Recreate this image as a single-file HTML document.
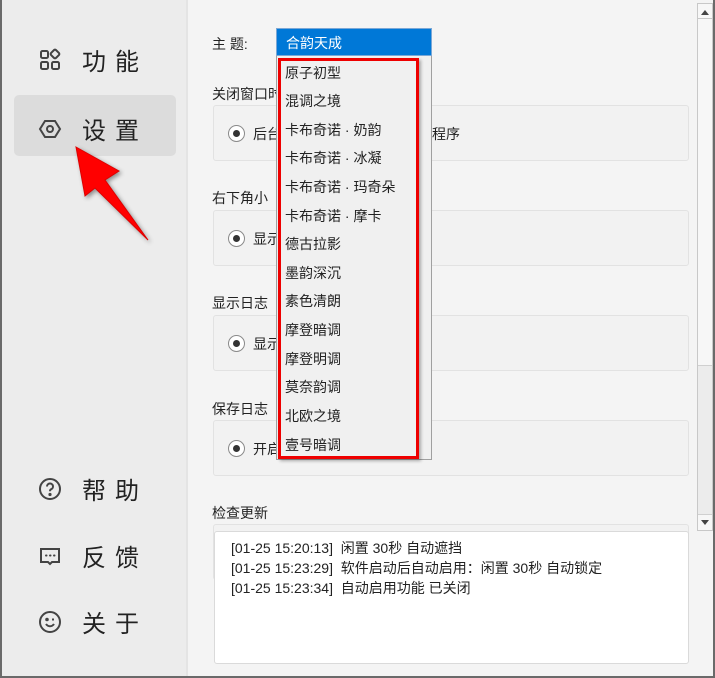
<!DOCTYPE html>
<html><head><meta charset="utf-8"><style>
*{margin:0;padding:0;box-sizing:border-box}
body{width:715px;height:678px;overflow:hidden;background:#f4f4f4;font-family:"Liberation Sans","Noto Sans CJK SC",sans-serif;position:relative;color:#222}
.win{position:absolute;left:0;top:0;width:715px;height:678px;border-left:2px solid #6a6a6a;border-bottom:2px solid #6a6a6a;border-right:2px solid #6a6a6a}
.side{position:absolute;left:2px;top:0;width:186px;height:676px;background:#ececec;border-right:2px solid #e4e4e4}
.nav{position:absolute;left:38px;font-size:24px;letter-spacing:9px;color:#222;display:flex;align-items:center}
.nav svg{margin-right:20px}
.sel{position:absolute;left:14px;top:95px;width:162px;height:61px;background:#dcdcdc;border-radius:5px}
.t{position:absolute;font-size:14px;color:#222}
.box{position:absolute;left:213px;width:476px;height:56px;border:1px solid #e2e2e2;border-radius:3px;background:#f2f2f2}
.radio{position:absolute;left:228px;width:17px;height:17px;border-radius:50%;border:1px solid #8a8a8a;background:#fff}
.radio:after{content:"";position:absolute;left:4px;top:4px;width:7px;height:7px;border-radius:50%;background:#333}
.dd{position:absolute;left:276px;top:28px;width:156px;height:28px;background:#0078d7;border:1px solid #7aa7d6;color:#fff;font-size:14px;padding:4px 0 0 9px}
.list{position:absolute;left:276px;top:56px;width:156px;height:404px;background:#f0f0f0;border:1px solid #a0a0a0;border-top:none}
.red{position:absolute;left:278px;top:58px;width:141px;height:401px;border:3px solid #ee0000;box-shadow:2px 2px 3px rgba(0,0,0,.3)}
.it{position:absolute;left:285px;font-size:14px;color:#222}
.log{position:absolute;left:214px;top:531px;width:475px;height:133px;background:#fff;border:1px solid #dadada;border-radius:3px;font-size:14px;padding:6px 0 0 16px;line-height:20px}
.sb{position:absolute;left:697px;top:3px;width:16px;height:528px;background:#f7f7f7;border:1px solid #c8c8c8}
</style></head><body>
<div class="side"></div>
<div class="sel"></div>
<div class="nav" style="top:42px"><svg width="24" height="24" viewBox="0 0 24 24" fill="none" stroke="#444" stroke-width="2"><rect x="3" y="3" width="7" height="7" rx="1.5"/><rect x="3" y="14" width="7" height="7" rx="1.5"/><rect x="14" y="14" width="7" height="7" rx="1.5"/><rect x="13.5" y="2.5" width="7" height="7" rx="1.5" transform="rotate(45 17 6)"/></svg>功能</div>
<div class="nav" style="top:111px"><svg width="24" height="24" viewBox="0 0 24 24" fill="none" stroke="#444" stroke-width="2"><path d="M7 4h10l5 8-5 8H7l-5-8z"/><circle cx="12" cy="12" r="3"/></svg>设置</div>
<div class="nav" style="top:471px"><svg width="24" height="24" viewBox="0 0 24 24" fill="none" stroke="#444" stroke-width="2"><circle cx="12" cy="12" r="10"/><path d="M9 9.5a3 3 0 1 1 4 2.8c-.8.4-1 1-1 2"/><circle cx="12" cy="17.5" r=".6" fill="#444"/></svg>帮助</div>
<div class="nav" style="top:538px"><svg width="24" height="24" viewBox="0 0 24 24" fill="none" stroke="#444" stroke-width="2"><path d="M3 5h18v13h-7l-2 2-2-2H3z"/><path d="M8 11.5h.5M12 11.5h.5M16 11.5h.5" stroke-linecap="round"/></svg>反馈</div>
<div class="nav" style="top:604px"><svg width="24" height="24" viewBox="0 0 24 24" fill="none" stroke="#444" stroke-width="2"><circle cx="12" cy="12" r="10"/><path d="M8 14c2 3 6 3 8 0"/><circle cx="9" cy="9.5" r=".8" fill="#444"/><path d="M14 9.5h2"/></svg>关于</div>
<svg style="position:absolute;left:0;top:0" width="200" height="260"><path d="M76 147 L119 171 L105 180 L148 240 L95 188 L85 196 Z" fill="#f00" stroke="#d00" stroke-width="1" style="filter:drop-shadow(2px 2px 2px rgba(0,0,0,.4))"/></svg>

<div class="t" style="left:212px;top:34px">主 题:</div>
<div class="t" style="left:212px;top:84px">关闭窗口时</div>
<div class="box" style="top:105px"></div><div class="radio" style="top:125px"></div><div class="t" style="left:253px;top:124px">后台</div><div class="t" style="left:432px;top:124px">程序</div>
<div class="t" style="left:212px;top:188px">右下角小</div>
<div class="box" style="top:210px"></div><div class="radio" style="top:230px"></div><div class="t" style="left:253px;top:229px">显示</div>
<div class="t" style="left:212px;top:293px">显示日志</div>
<div class="box" style="top:315px"></div><div class="radio" style="top:335px"></div><div class="t" style="left:253px;top:334px">显示</div>
<div class="t" style="left:212px;top:399px">保存日志</div>
<div class="box" style="top:420px"></div><div class="radio" style="top:440px"></div><div class="t" style="left:253px;top:439px">开启</div>
<div class="t" style="left:212px;top:503px">检查更新</div>
<div class="box" style="top:524px"></div>
<div class="log">[01-25 15:20:13]&nbsp; 闲置 30秒 自动遮挡<br>[01-25 15:23:29]&nbsp; 软件启动后自动启用：闲置 30秒 自动锁定<br>[01-25 15:23:34]&nbsp; 自动启用功能 已关闭</div>
<div class="sb"><div style="position:absolute;left:3px;top:6px;border-left:4px solid transparent;border-right:4px solid transparent;border-bottom:5px solid #444"></div><div style="position:absolute;left:0;top:14px;width:14px;border-top:1px solid #c8c8c8"></div><div style="position:absolute;left:0;top:361px;width:14px;height:150px;background:#ececec;border-top:1px solid #d0d0d0;border-bottom:1px solid #d0d0d0"></div><div style="position:absolute;left:3px;top:516px;border-left:4px solid transparent;border-right:4px solid transparent;border-top:5px solid #444"></div></div>

<div class="dd">合韵天成</div>
<div class="list"></div>
<div class="red"></div>
<div class="it" style="top:63px">原子初型</div>
<div class="it" style="top:91px">混调之境</div>
<div class="it" style="top:120px">卡布奇诺 · 奶韵</div>
<div class="it" style="top:148px">卡布奇诺 · 冰凝</div>
<div class="it" style="top:177px">卡布奇诺 · 玛奇朵</div>
<div class="it" style="top:206px">卡布奇诺 · 摩卡</div>
<div class="it" style="top:234px">德古拉影</div>
<div class="it" style="top:263px">墨韵深沉</div>
<div class="it" style="top:291px">素色清朗</div>
<div class="it" style="top:320px">摩登暗调</div>
<div class="it" style="top:349px">摩登明调</div>
<div class="it" style="top:377px">莫奈韵调</div>
<div class="it" style="top:406px">北欧之境</div>
<div class="it" style="top:435px">壹号暗调</div>
<div class="win"></div>
</body></html>
